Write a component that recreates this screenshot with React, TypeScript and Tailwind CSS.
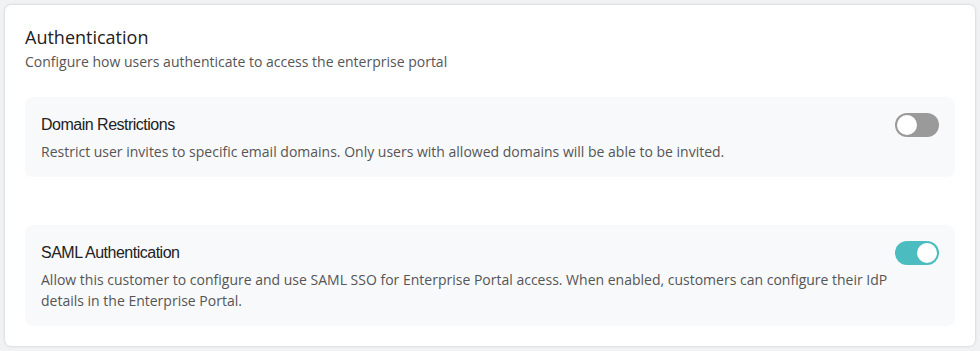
import { useState } from "react";

function Toggle({ on, onChange }: { on: boolean; onChange: () => void }) {
  return (
    <button
      onClick={onChange}
      className={`relative h-6 w-11 shrink-0 rounded-full transition ${on ? "bg-[#4bbcbf]" : "bg-[#9a9a9a]"}`}
    >
      <span
        className={`absolute top-[2px] h-5 w-5 rounded-full bg-white transition ${on ? "left-[22px]" : "left-[2px]"}`}
      />
    </button>
  );
}

function SettingRow({
  title,
  description,
  on,
  onChange,
}: {
  title: string;
  description: string;
  on: boolean;
  onChange: () => void;
}) {
  return (
    <div className="flex items-start justify-between rounded-lg bg-[#f8f9fb] px-4 pt-4 pb-[15px]">
      <div className="min-w-0 flex-1">
        <div className="font-['Liberation_Sans',sans-serif] text-[16px] leading-6 tracking-[-0.5px] text-[#222]">
          {title}
        </div>
        <p className="mt-1 text-[14px] leading-[21px] text-[#555]">{description}</p>
      </div>
      <Toggle on={on} onChange={onChange} />
    </div>
  );
}

export default function App() {
  const [domains, setDomains] = useState(false);
  const [saml, setSaml] = useState(true);

  return (
    <div className="min-h-[351px] bg-[#f1f2f4] p-[5px] font-['Open_Sans',sans-serif]">
      <section className="rounded-md bg-white px-5 pt-5 pb-5 shadow-[0_0_3px_rgba(0,0,0,0.18)]">
        <h2 className="text-[18px] leading-6 font-medium text-[#222]">Authentication</h2>
        <p className="mt-[3px] text-[14px] leading-5 text-[#555]">
          Configure how users authenticate to access the enterprise portal
        </p>

        <div className="mt-[25px] flex flex-col gap-12">
          <SettingRow
            title="Domain Restrictions"
            description="Restrict user invites to specific email domains. Only users with allowed domains will be able to be invited."
            on={domains}
            onChange={() => setDomains(!domains)}
          />
          <SettingRow
            title="SAML Authentication"
            description="Allow this customer to configure and use SAML SSO for Enterprise Portal access. When enabled, customers can configure their IdP details in the Enterprise Portal."
            on={saml}
            onChange={() => setSaml(!saml)}
          />
        </div>
      </section>
    </div>
  );
}
